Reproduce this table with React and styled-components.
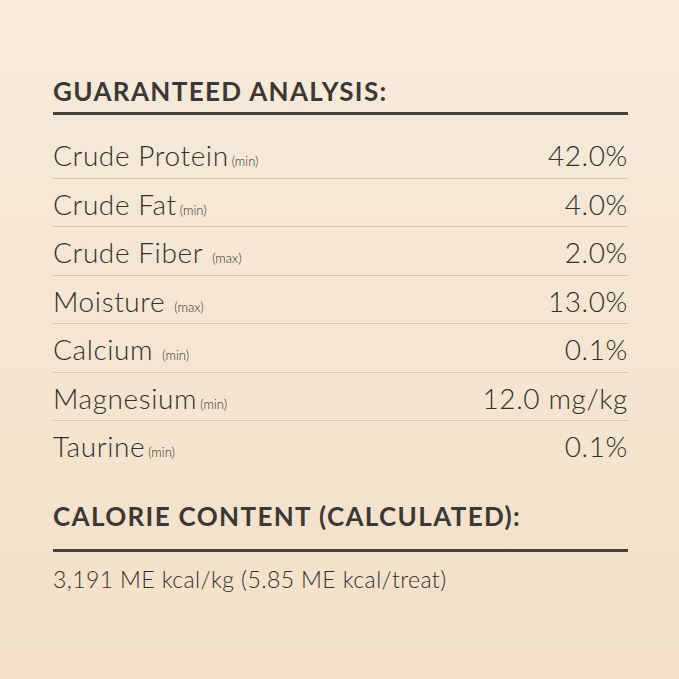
import React from "react";
import styled, { createGlobalStyle } from "styled-components";

const Global = createGlobalStyle`
  html, body { margin: 0; padding: 0; }
  body {
    font-family: "Lato", "Liberation Sans", sans-serif;
    color: #33302d;
  }
`;

const rows = [
  { name: "Crude Protein", note: "(min)", value: "42.0%" },
  { name: "Crude Fat", note: "(min)", value: "4.0%" },
  { name: "Crude Fiber", note: "(max)", value: "2.0%", gap: true },
  { name: "Moisture", note: "(max)", value: "13.0%", gap: true },
  { name: "Calcium", note: "(min)", value: "0.1%", gap: true },
  { name: "Magnesium", note: "(min)", value: "12.0 mg/kg" },
  { name: "Taurine", note: "(min)", value: "0.1%" },
];

const App = () => (
  <Page>
    <Global />
    <Panel>
      <Heading>GUARANTEED ANALYSIS:</Heading>
      <Rule />
      <Table>
        {rows.map((r, i) => (
          <Row key={r.name} last={i === rows.length - 1}>
            <Name>
              {r.name}
              <Note gap={r.gap}>{r.note}</Note>
            </Name>
            <Value>{r.value}</Value>
          </Row>
        ))}
      </Table>
      <Heading top>CALORIE CONTENT (CALCULATED):</Heading>
      <Rule wide />
      <Calories>3,191 ME kcal/kg (5.85 ME kcal/treat)</Calories>
    </Panel>
  </Page>
);

export default App;

const Page = styled.div`
  width: 679px;
  height: 679px;
  background: linear-gradient(180deg, #f7ebdb 0%, #f3e0c7 100%);
  overflow: hidden;
`;

const Panel = styled.div`
  width: 575px;
  padding: 75px 0 0 53px;
  display: flex;
  flex-direction: column;
`;

const Heading = styled.h2`
  margin: ${(p) => (p.top ? "30px" : "0")} 0 0;
  font-size: 26px;
  font-weight: 700;
  line-height: 32px;
  letter-spacing: 1.35px;
  color: #3b3835;
`;

const Rule = styled.div`
  height: 3px;
  margin-top: ${(p) => (p.wide ? "17px" : "5px")};
  background: #45413d;
`;

const Table = styled.div`
  display: flex;
  flex-direction: column;
  margin-top: 15px;
`;

const Row = styled.div`
  display: flex;
  justify-content: space-between;
  align-items: baseline;
  height: 48.5px;
  box-sizing: border-box;
  padding-top: 9px;
  border-bottom: ${(p) => (p.last ? "none" : "1px solid #d3c6b4")};
  font-size: 28px;
  font-weight: 300;
  line-height: 32px;
  letter-spacing: 0.6px;
`;

const Name = styled.span`
  display: flex;
  align-items: baseline;
`;

const Note = styled.span`
  font-size: 13px;
  font-weight: 300;
  letter-spacing: 0;
  margin-left: ${(p) => (p.gap ? "9px" : "3px")};
`;

const Value = styled.span``;

const Calories = styled.div`
  margin-top: 13px;
  font-size: 23px;
  font-weight: 300;
  line-height: 28px;
  letter-spacing: 0.4px;
`;
